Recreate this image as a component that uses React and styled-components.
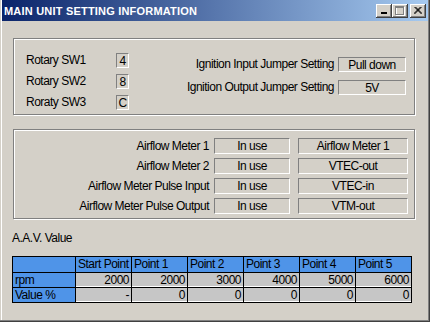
import React from "react";
import styled, { createGlobalStyle } from "styled-components";

const face = "#d4d0c8";
const shadow = "#808080";
const darkShadow = "#404040";
const highlight = "#ffffff";
const gridBlue = "#4f94e8";

const GlobalStyle = createGlobalStyle`
    body {
        margin: 0;
        background: ${face};
        font-family: "Liberation Sans", Arial, sans-serif;
        font-size: 12px;
        letter-spacing: -0.5px;
        color: #000;
    }
`;

const Window = styled.div`
    width: 430px;
    height: 322px;
    box-sizing: border-box;
    background: ${face};
    display: flex;
    flex-direction: column;
    box-shadow: inset -1px -1px 0 ${darkShadow}, inset -2px -2px 0 ${shadow}, inset 1px 0 0 ${face}, inset 2px 0 0 ${highlight};
`;

const TitleBar = styled.div`
    height: 21px;
    margin: 0 2px;
    display: flex;
    align-items: center;
    padding-left: 2px;
    background: linear-gradient(to right, #0a246a, #a6caf0);
`;

const Title = styled.span`
    color: #fff;
    font-weight: bold;
    font-size: 11px;
    letter-spacing: 0.2px;
`;

const Buttons = styled.div`
    margin-left: auto;
    margin-right: 2px;
    display: flex;
`;

const CaptionButton = styled.div`
    width: 16px;
    height: 14px;
    margin-left: ${props => props.$gap || 0}px;
    background: ${face};
    box-shadow: inset -1px -1px 0 ${darkShadow}, inset 1px 1px 0 ${highlight}, inset -2px -2px 0 ${shadow};
    display: flex;
    align-items: center;
    justify-content: center;
`;

const Content = styled.div`
    padding: 17px 15px 0 13px;
    display: flex;
    flex-direction: column;
`;

const Group = styled.div`
    border: 1px solid ${shadow};
    box-shadow: 1px 1px 0 ${highlight}, inset 1px 1px 0 ${highlight};
    margin-top: ${props => props.$top || 0}px;
    height: ${props => props.$height}px;
    box-sizing: border-box;
`;

const SwitchGroup = styled(Group)`
    display: flex;
    padding: 11px 8px 0 12px;
`;

const SwitchColumn = styled.div`
    display: grid;
    grid-template-columns: 90px 13px;
    grid-auto-rows: 21px;
    align-items: center;
`;

const JumperColumn = styled.div`
    margin-left: auto;
    padding-top: 7px;
    display: grid;
    grid-template-columns: auto 68px;
    grid-auto-rows: 15px;
    row-gap: 8px;
    column-gap: 4px;
    align-items: center;
`;

const Label = styled.span`
    text-align: ${props => props.$align || "left"};
    padding-right: ${props => props.$pad || 0}px;
    white-space: nowrap;
    line-height: 15px;
`;

const ValueBox = styled.div`
    height: ${props => props.$h || 15}px;
    box-sizing: border-box;
    border-top: 1px solid ${shadow};
    border-left: 1px solid ${shadow};
    border-bottom: 1px solid ${highlight};
    border-right: 1px solid ${highlight};
    display: flex;
    align-items: center;
    justify-content: center;
    line-height: 1;
`;

const MeterGroup = styled(Group)`
    padding: 8px 6px 0 0;
    display: grid;
    grid-template-columns: 1fr 76px 118px;
    grid-auto-rows: 16px;
    row-gap: 4px;
    align-items: center;
`;

const WideBox = styled(ValueBox)`
    margin-left: 8px;
`;

const SectionTitle = styled.div`
    margin-top: 12px;
    line-height: 15px;
    margin-left: -1px;
`;

const Grid = styled.div`
    margin-top: 10px;
    margin-left: -1px;
    width: max-content;
    display: grid;
    grid-template-columns: 62px repeat(6, 55px);
    grid-template-rows: 15px 14px 14px;
    gap: 1px;
    padding: 1px;
    background: #000;
`;

const Cell = styled.div`
    background: ${props => (props.$fixed ? gridBlue : "#c6c6c6")};
    box-shadow: ${props => (props.$fixed ? "none" : `inset 0 -1px 0 ${highlight}`)};
    text-align: ${props => (props.$right ? "right" : "left")};
    padding: 0 2px;
    line-height: 14px;
    white-space: nowrap;
    overflow: hidden;
`;

const switches = [
    ["Rotary SW1", "4"],
    ["Rotary SW2", "8"],
    ["Roraty SW3", "C"],
];

const jumpers = [
    ["Ignition Input Jumper Setting", "Pull down"],
    ["Ignition Output Jumper Setting", "5V"],
];

const meters = [
    ["Airflow Meter 1", "In use", "Airflow Meter 1"],
    ["Airflow Meter 2", "In use", "VTEC-out"],
    ["Airflow Meter Pulse Input", "In use", "VTEC-in"],
    ["Airflow Meter Pulse Output", "In use", "VTM-out"],
];

const columns = ["Start Point", "Point 1", "Point 2", "Point 3", "Point 4", "Point 5"];
const rows = [
    ["rpm", ["2000", "2000", "3000", "4000", "5000", "6000"]],
    ["Value %", ["-", "0", "0", "0", "0", "0"]],
];

const MinIcon = () => (
    <svg width="8" height="7" viewBox="0 0 8 7">
        <rect x="1" y="5" width="6" height="2" fill="#000" />
    </svg>
);

const MaxIcon = () => (
    <svg width="10" height="10" viewBox="0 0 10 10">
        <rect x="1.5" y="1.5" width="8" height="8" fill="none" stroke={highlight} />
        <rect x="0.5" y="0.5" width="8" height="8" fill="none" stroke={shadow} />
        <rect x="1" y="1" width="7" height="1" fill={shadow} />
    </svg>
);

const CloseIcon = () => (
    <svg width="8" height="7" viewBox="0 0 8 7">
        <path d="M0.5 0 L7.5 7 M7.5 0 L0.5 7 M1.5 0 L8 6.5 M6.5 0 L0 6.5" stroke="#000" strokeWidth="1" />
    </svg>
);

export default function App() {
    return (
        <>
            <GlobalStyle />
            <Window>
                <TitleBar>
                    <Title>MAIN UNIT SETTING INFORMATION</Title>
                    <Buttons>
                        <CaptionButton><MinIcon /></CaptionButton>
                        <CaptionButton><MaxIcon /></CaptionButton>
                        <CaptionButton $gap={2}><CloseIcon /></CaptionButton>
                    </Buttons>
                </TitleBar>
                <Content>
                    <SwitchGroup $height={77}>
                        <SwitchColumn>
                            {switches.map(([name, value]) => (
                                <React.Fragment key={name}>
                                    <Label>{name}</Label>
                                    <ValueBox>{value}</ValueBox>
                                </React.Fragment>
                            ))}
                        </SwitchColumn>
                        <JumperColumn>
                            {jumpers.map(([name, value]) => (
                                <React.Fragment key={name}>
                                    <Label $align="right">{name}</Label>
                                    <ValueBox>{value}</ValueBox>
                                </React.Fragment>
                            ))}
                        </JumperColumn>
                    </SwitchGroup>
                    <MeterGroup $top={14} $height={90}>
                        {meters.map(([name, state, signal]) => (
                            <React.Fragment key={name}>
                                <Label $align="right" $pad={5}>{name}</Label>
                                <ValueBox $h={16}>{state}</ValueBox>
                                <WideBox $h={16}>{signal}</WideBox>
                            </React.Fragment>
                        ))}
                    </MeterGroup>
                    <SectionTitle>A.A.V. Value</SectionTitle>
                    <Grid>
                        <Cell $fixed />
                        {columns.map(c => (
                            <Cell $fixed key={c}>{c}</Cell>
                        ))}
                        {rows.map(([name, values]) => (
                            <React.Fragment key={name}>
                                <Cell $fixed>{name}</Cell>
                                {values.map((v, i) => (
                                    <Cell $right key={i}>{v}</Cell>
                                ))}
                            </React.Fragment>
                        ))}
                    </Grid>
                </Content>
            </Window>
        </>
    );
}
